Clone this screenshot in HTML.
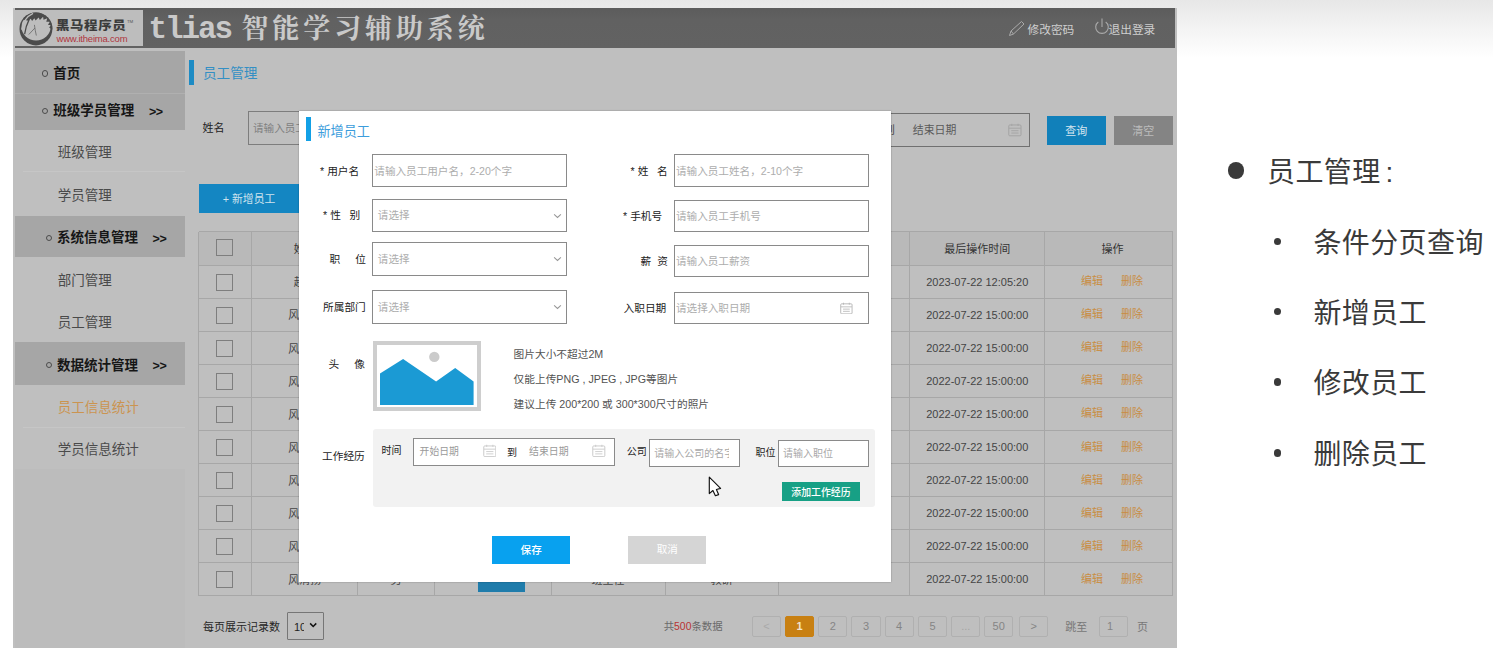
<!DOCTYPE html>
<html lang="zh-CN"><head><meta charset="utf-8"><title>tlias 智能学习辅助系统</title>
<style>
*{box-sizing:border-box;margin:0;padding:0}
html,body{width:1493px;height:657px;overflow:hidden}
body{position:relative;background:linear-gradient(#e7e7e7 0,#f4f4f4 30px,#fff 58px,#fff 100%);font-family:"Liberation Sans","Noto Sans CJK SC",sans-serif;font-size:11px;color:#333}
.a{position:absolute;white-space:nowrap}
.app{left:13.3px;top:7.5px;width:1164px;height:640.3px;background:#bfbfbf}
.hdr{left:14.5px;top:7.9px;width:1160.9px;height:40.2px;background:linear-gradient(#5c5c5c,#616161 30%,#626262)}
.logo{left:14.9px;top:9.7px;width:128.1px;height:36.4px;background:#bdbdbd}
.title{left:148.5px;top:8.5px;height:39px;line-height:39px;color:#c9c9c9;font-weight:bold;font-size:27.5px}
.title .m{font-family:"Liberation Mono",monospace;font-size:31px;letter-spacing:-2.1px;position:relative;top:0.5px}
.title .k{font-family:"Liberation Serif","Noto Serif CJK SC",serif;font-size:27px;letter-spacing:3.9px;margin-left:10.4px}
.sh{left:15px;width:170px;background:#a6a6a6;font-weight:bold;font-size:13.5px;color:#151515}
.ss{left:15px;width:170px;background:#bfbfbf;font-size:13.5px;color:#4a4a4a}
.inp{border:1px solid #8a8a8a;background:#fff}
.ph{color:#adadad;font-size:10.6px}
.lb{color:#222;font-size:10.7px}
.cell{color:#444;font-size:11px;text-align:center;padding-top:0.5px}
.cj{padding-top:1.2px}
.op{color:#c98d43;font-size:11px}
.pg{border:1px solid #b0b0b0;color:#858585;font-size:11px;text-align:center;height:20.6px;line-height:19.4px;top:616.2px;width:29.3px;border-radius:2px}
.sl{font-family:"Liberation Sans","Noto Sans CJK SC",sans-serif;color:#3a3a3a;font-size:28px;letter-spacing:0.4px}
</style></head>
<body>
<div class="a app"></div>
<div class="a hdr"></div>
<div class="a logo"></div>
<svg class="a" style="left:14px;top:8px" width="50" height="42" viewBox="0 0 782 657">
<defs><clipPath id="lc"><circle cx="343" cy="328" r="257"/></clipPath></defs>
<circle cx="343" cy="328" r="257" fill="#4b4b4b"/>
<ellipse cx="345" cy="296" rx="227" ry="212" fill="#bdbdbd"/>
<polygon clip-path="url(#lc)" fill="#4b4b4b" points="222,200 262,170 283,202 318,160 338,196 385,148 405,186 455,135 462,182 520,160 505,216 562,216 530,262 586,270 548,302 592,335 680,340 680,10 180,10 140,180"/>
<path d="M292 88 Q160 150 120 330" fill="none" stroke="#bdbdbd" stroke-width="18" stroke-linecap="round"/>
<path d="M236 182 Q182 290 168 400" fill="none" stroke="#4b4b4b" stroke-width="20" stroke-linecap="round"/>
<path d="M320 270 Q330 350 348 425 M322 318 L236 410" fill="none" stroke="#5a5a5a" stroke-width="11" stroke-linecap="round"/>
</svg>
<div class="a" style="left:56px;top:16.6px;font-size:13.5px;font-weight:900;color:#3c3c3c;letter-spacing:0.55px;line-height:18px;transform:scaleY(0.89);transform-origin:0 88%">黑马程序员</div>
<div class="a" style="left:126.9px;top:18.8px;font-size:4.4px;color:#555;line-height:5px">TM</div>
<div class="a" style="left:56.5px;top:33px;font-size:9.5px;color:#b0363e;line-height:11px;letter-spacing:-0.2px">www.itheima.com</div>
<div class="a title"><span class="m">tlias</span><span class="k">智能学习辅助系统</span></div>
<svg class="a" style="left:1007px;top:20px" width="20" height="18" viewBox="0 0 20 18"><path d="M2.5 15.5 L4 11 L14.5 1.5 L17 4 L6.5 14 Z M4 11 L6.5 14" fill="none" stroke="#aaa" stroke-width="1"/></svg>
<div class="a" style="left:1027.5px;top:21.5px;font-size:11.7px;color:#cfcfcf;line-height:15px">修改密码</div>
<svg class="a" style="left:1093px;top:17px" width="18" height="20" viewBox="0 0 18 20"><path d="M5.3 5 A6.3 6.3 0 1 0 12.7 5" fill="none" stroke="#aaa" stroke-width="1.1"/><path d="M9 1.5 V10" stroke="#aaa" stroke-width="1.1"/></svg>
<div class="a" style="left:1108.5px;top:21.5px;font-size:11.7px;color:#cfcfcf;line-height:15px">退出登录</div>
<div class="a" style="left:15px;top:51px;width:170px;height:597px;background:#bcbcbc"></div>
<div class="a sh" style="top:51px;height:42.3px"></div>
<div class="a" style="left:41.9px;top:70.45px;width:6.1px;height:6.1px;border:0.9px solid #4c4c4c;border-radius:50%"></div>
<div class="a" style="left:53.3px;top:63.75px;line-height:20px;font-weight:bold;font-size:13.5px;color:#161616">首页</div>
<div class="a" style="left:15px;top:93.2px;width:170px;height:1px;background:#b0b0b0"></div>
<div class="a sh" style="top:93.8px;height:36px"></div>
<div class="a" style="left:41.9px;top:107.7px;width:6.1px;height:6.1px;border:0.9px solid #4c4c4c;border-radius:50%"></div>
<div class="a" style="left:53.3px;top:101.0px;line-height:20px;font-weight:bold;font-size:13.5px;color:#161616">班级学员管理</div>
<div class="a" style="left:149px;top:101.5px;line-height:20px;font-weight:bold;font-size:12.5px;color:#161616;letter-spacing:-0.5px">&gt;&gt;</div>
<div class="a ss" style="top:129.8px;height:42px"></div>
<div class="a" style="left:57.8px;top:142.9px;line-height:20px;font-size:13.5px;color:#4a4a4a">班级管理</div>
<div class="a" style="left:23px;top:171.3px;width:162px;height:1px;background:#c6c6c6"></div>
<div class="a ss" style="top:171.8px;height:43.8px"></div>
<div class="a" style="left:57.8px;top:185.8px;line-height:20px;font-size:13.5px;color:#4a4a4a">学员管理</div>
<div class="a sh" style="top:215.6px;height:41.4px"></div>
<div class="a" style="left:45.5px;top:234.79999999999998px;width:6.1px;height:6.1px;border:0.9px solid #4c4c4c;border-radius:50%"></div>
<div class="a" style="left:56.9px;top:228.1px;line-height:20px;font-weight:bold;font-size:13.5px;color:#161616">系统信息管理</div>
<div class="a" style="left:152.6px;top:228.6px;line-height:20px;font-weight:bold;font-size:12.5px;color:#161616;letter-spacing:-0.5px">&gt;&gt;</div>
<div class="a ss" style="top:257px;height:43px"></div>
<div class="a" style="left:57.8px;top:270.6px;line-height:20px;font-size:13.5px;color:#4a4a4a">部门管理</div>
<div class="a" style="left:23px;top:299.5px;width:162px;height:1px;background:#c6c6c6"></div>
<div class="a ss" style="top:300px;height:42.4px"></div>
<div class="a" style="left:57.8px;top:313.3px;line-height:20px;font-size:13.5px;color:#4a4a4a">员工管理</div>
<div class="a sh" style="top:342.4px;height:42.2px"></div>
<div class="a" style="left:45.5px;top:362.2px;width:6.1px;height:6.1px;border:0.9px solid #4c4c4c;border-radius:50%"></div>
<div class="a" style="left:56.9px;top:355.5px;line-height:20px;font-weight:bold;font-size:13.5px;color:#161616">数据统计管理</div>
<div class="a" style="left:152.6px;top:356.0px;line-height:20px;font-weight:bold;font-size:12.5px;color:#161616;letter-spacing:-0.5px">&gt;&gt;</div>
<div class="a ss" style="top:384.6px;height:43px"></div>
<div class="a" style="left:57.8px;top:398.20000000000005px;line-height:20px;font-size:13.5px;color:#cb9450">员工信息统计</div>
<div class="a" style="left:23px;top:427.1px;width:162px;height:1px;background:#c6c6c6"></div>
<div class="a ss" style="top:427.6px;height:41px"></div>
<div class="a" style="left:57.8px;top:440.20000000000005px;line-height:20px;font-size:13.5px;color:#4a4a4a">学员信息统计</div>
<div class="a" style="left:189px;top:59.8px;width:5px;height:25.2px;background:#1d8bc4"></div>
<div class="a" style="left:203px;top:64.2px;line-height:20px;font-size:13.6px;color:#338fc4">员工管理</div>
<div class="a lb" style="left:202.6px;top:120px;line-height:16px;color:#222;font-size:11px">姓名</div>
<div class="a" style="left:248.3px;top:111.1px;width:120px;height:33.6px;border:1px solid #7d7d7d"></div>
<div class="a" style="left:253px;top:120.4px;line-height:16px;font-size:10.6px;color:#808080">请输入员工姓名</div>
<div class="a" style="left:700px;top:113.1px;width:329.7px;height:33.6px;border:1px solid #707070"></div>
<div class="a" style="left:884px;top:122.2px;line-height:16px;font-size:10.9px;color:#444">到</div>
<div class="a" style="left:912.8px;top:122.2px;line-height:16px;font-size:10.9px;color:#5a5a5a">结束日期</div>
<svg class="a" style="left:1008px;top:122.8px" width="13.8" height="13.8" viewBox="0 0 14 14"><rect x="0.8" y="2" width="12.4" height="11" rx="1" fill="none" stroke="#a4a4a4" stroke-width="1"/><path d="M1 5.3 H13 M3.8 0.8 V3 M10.2 0.8 V3 M3.3 7.8 H10.7 M3.3 10.2 H10.7" stroke="#a4a4a4" stroke-width="0.9" fill="none"/></svg>
<div class="a" style="left:1046.5px;top:115.8px;width:59.5px;height:29px;background:#1180ba;color:#d5e6f0;font-size:11px;text-align:center;line-height:29.4px;padding-top:0.8px">查询</div>
<div class="a" style="left:1113.7px;top:115.8px;width:59.3px;height:29px;background:#848484;color:#bcbcbc;font-size:11px;text-align:center;line-height:29.4px;padding-top:0.8px">清空</div>
<div class="a" style="left:198.5px;top:184.2px;width:104px;height:29px;background:#1486c2;color:#cfe3ee;font-size:10.8px;text-align:center;line-height:31px;padding-right:3px">+ 新增员工</div>
<div class="a" style="left:198.5px;top:231.6px;width:973.8px;height:33.6px;background:#b9b9b9"></div>
<div class="a" style="left:198.5px;top:231.1px;width:974.3px;height:1px;background:#a7a7a7"></div>
<div class="a" style="left:198.5px;top:264.7px;width:974.3px;height:1px;background:#a7a7a7"></div>
<div class="a" style="left:198.5px;top:297.76px;width:974.3px;height:1px;background:#a7a7a7"></div>
<div class="a" style="left:198.5px;top:330.82px;width:974.3px;height:1px;background:#a7a7a7"></div>
<div class="a" style="left:198.5px;top:363.88px;width:974.3px;height:1px;background:#a7a7a7"></div>
<div class="a" style="left:198.5px;top:396.94px;width:974.3px;height:1px;background:#a7a7a7"></div>
<div class="a" style="left:198.5px;top:430.0px;width:974.3px;height:1px;background:#a7a7a7"></div>
<div class="a" style="left:198.5px;top:463.06px;width:974.3px;height:1px;background:#a7a7a7"></div>
<div class="a" style="left:198.5px;top:496.12px;width:974.3px;height:1px;background:#a7a7a7"></div>
<div class="a" style="left:198.5px;top:529.18px;width:974.3px;height:1px;background:#a7a7a7"></div>
<div class="a" style="left:198.5px;top:562.24px;width:974.3px;height:1px;background:#a7a7a7"></div>
<div class="a" style="left:198.5px;top:595.3px;width:974.3px;height:1px;background:#a7a7a7"></div>
<div class="a" style="left:198.0px;top:231.6px;width:1px;height:364.19999999999993px;background:#a7a7a7"></div>
<div class="a" style="left:251.1px;top:231.6px;width:1px;height:364.19999999999993px;background:#a7a7a7"></div>
<div class="a" style="left:357.3px;top:231.6px;width:1px;height:364.19999999999993px;background:#a7a7a7"></div>
<div class="a" style="left:433.8px;top:231.6px;width:1px;height:364.19999999999993px;background:#a7a7a7"></div>
<div class="a" style="left:550.5px;top:231.6px;width:1px;height:364.19999999999993px;background:#a7a7a7"></div>
<div class="a" style="left:664.5px;top:231.6px;width:1px;height:364.19999999999993px;background:#a7a7a7"></div>
<div class="a" style="left:778.0px;top:231.6px;width:1px;height:364.19999999999993px;background:#a7a7a7"></div>
<div class="a" style="left:909.1px;top:231.6px;width:1px;height:364.19999999999993px;background:#a7a7a7"></div>
<div class="a" style="left:1044.4px;top:231.6px;width:1px;height:364.19999999999993px;background:#a7a7a7"></div>
<div class="a" style="left:1171.8px;top:231.6px;width:1px;height:364.19999999999993px;background:#a7a7a7"></div>
<div class="a" style="left:216.2px;top:239.0px;width:16.7px;height:17.2px;border:1px solid #7e7e7e"></div>
<div class="a" style="left:216.2px;top:273.7px;width:16.7px;height:17.2px;border:1px solid #7e7e7e"></div>
<div class="a" style="left:216.2px;top:306.76px;width:16.7px;height:17.2px;border:1px solid #7e7e7e"></div>
<div class="a" style="left:216.2px;top:339.82px;width:16.7px;height:17.2px;border:1px solid #7e7e7e"></div>
<div class="a" style="left:216.2px;top:372.88px;width:16.7px;height:17.2px;border:1px solid #7e7e7e"></div>
<div class="a" style="left:216.2px;top:405.94px;width:16.7px;height:17.2px;border:1px solid #7e7e7e"></div>
<div class="a" style="left:216.2px;top:439.0px;width:16.7px;height:17.2px;border:1px solid #7e7e7e"></div>
<div class="a" style="left:216.2px;top:472.06px;width:16.7px;height:17.2px;border:1px solid #7e7e7e"></div>
<div class="a" style="left:216.2px;top:505.12px;width:16.7px;height:17.2px;border:1px solid #7e7e7e"></div>
<div class="a" style="left:216.2px;top:538.18px;width:16.7px;height:17.2px;border:1px solid #7e7e7e"></div>
<div class="a" style="left:216.2px;top:571.24px;width:16.7px;height:17.2px;border:1px solid #7e7e7e"></div>
<div class="a cell cj" style="left:251.6px;top:231.6px;width:106.20000000000002px;height:33.06px;line-height:33.06px;color:#333">姓名</div>
<div class="a cell cj" style="left:909.6px;top:231.6px;width:135.30000000000007px;height:33.06px;line-height:33.06px;color:#333">最后操作时间</div>
<div class="a cell cj" style="left:1044.9px;top:231.6px;width:127.39999999999986px;height:33.06px;line-height:33.06px;color:#333;padding-left:8px">操作</div>
<div class="a cell cj" style="left:251.6px;top:265.2px;width:106.20000000000002px;height:33.06px;line-height:33.06px;">赵敏</div>
<div class="a cell" style="left:909.6px;top:265.2px;width:135.30000000000007px;height:33.06px;line-height:33.06px;">2023-07-22 12:05:20</div>
<div class="a op" style="left:1080.9px;top:265.2px;line-height:33.06px">编辑</div>
<div class="a op" style="left:1121.1px;top:265.2px;line-height:33.06px">删除</div>
<div class="a cell cj" style="left:251.6px;top:298.26px;width:106.20000000000002px;height:33.06px;line-height:33.06px;">风清扬</div>
<div class="a cell" style="left:909.6px;top:298.26px;width:135.30000000000007px;height:33.06px;line-height:33.06px;">2022-07-22 15:00:00</div>
<div class="a op" style="left:1080.9px;top:298.26px;line-height:33.06px">编辑</div>
<div class="a op" style="left:1121.1px;top:298.26px;line-height:33.06px">删除</div>
<div class="a cell cj" style="left:251.6px;top:331.32px;width:106.20000000000002px;height:33.06px;line-height:33.06px;">风清扬</div>
<div class="a cell" style="left:909.6px;top:331.32px;width:135.30000000000007px;height:33.06px;line-height:33.06px;">2022-07-22 15:00:00</div>
<div class="a op" style="left:1080.9px;top:331.32px;line-height:33.06px">编辑</div>
<div class="a op" style="left:1121.1px;top:331.32px;line-height:33.06px">删除</div>
<div class="a cell cj" style="left:251.6px;top:364.38px;width:106.20000000000002px;height:33.06px;line-height:33.06px;">风清扬</div>
<div class="a cell" style="left:909.6px;top:364.38px;width:135.30000000000007px;height:33.06px;line-height:33.06px;">2022-07-22 15:00:00</div>
<div class="a op" style="left:1080.9px;top:364.38px;line-height:33.06px">编辑</div>
<div class="a op" style="left:1121.1px;top:364.38px;line-height:33.06px">删除</div>
<div class="a cell cj" style="left:251.6px;top:397.44px;width:106.20000000000002px;height:33.06px;line-height:33.06px;">风清扬</div>
<div class="a cell" style="left:909.6px;top:397.44px;width:135.30000000000007px;height:33.06px;line-height:33.06px;">2022-07-22 15:00:00</div>
<div class="a op" style="left:1080.9px;top:397.44px;line-height:33.06px">编辑</div>
<div class="a op" style="left:1121.1px;top:397.44px;line-height:33.06px">删除</div>
<div class="a cell cj" style="left:251.6px;top:430.5px;width:106.20000000000002px;height:33.06px;line-height:33.06px;">风清扬</div>
<div class="a cell" style="left:909.6px;top:430.5px;width:135.30000000000007px;height:33.06px;line-height:33.06px;">2022-07-22 15:00:00</div>
<div class="a op" style="left:1080.9px;top:430.5px;line-height:33.06px">编辑</div>
<div class="a op" style="left:1121.1px;top:430.5px;line-height:33.06px">删除</div>
<div class="a cell cj" style="left:251.6px;top:463.56px;width:106.20000000000002px;height:33.06px;line-height:33.06px;">风清扬</div>
<div class="a cell" style="left:909.6px;top:463.56px;width:135.30000000000007px;height:33.06px;line-height:33.06px;">2022-07-22 15:00:00</div>
<div class="a op" style="left:1080.9px;top:463.56px;line-height:33.06px">编辑</div>
<div class="a op" style="left:1121.1px;top:463.56px;line-height:33.06px">删除</div>
<div class="a cell cj" style="left:251.6px;top:496.62px;width:106.20000000000002px;height:33.06px;line-height:33.06px;">风清扬</div>
<div class="a cell" style="left:909.6px;top:496.62px;width:135.30000000000007px;height:33.06px;line-height:33.06px;">2022-07-22 15:00:00</div>
<div class="a op" style="left:1080.9px;top:496.62px;line-height:33.06px">编辑</div>
<div class="a op" style="left:1121.1px;top:496.62px;line-height:33.06px">删除</div>
<div class="a cell cj" style="left:251.6px;top:529.68px;width:106.20000000000002px;height:33.06px;line-height:33.06px;">风清扬</div>
<div class="a cell" style="left:909.6px;top:529.68px;width:135.30000000000007px;height:33.06px;line-height:33.06px;">2022-07-22 15:00:00</div>
<div class="a op" style="left:1080.9px;top:529.68px;line-height:33.06px">编辑</div>
<div class="a op" style="left:1121.1px;top:529.68px;line-height:33.06px">删除</div>
<div class="a cell cj" style="left:251.6px;top:562.74px;width:106.20000000000002px;height:33.06px;line-height:33.06px;">风清扬</div>
<div class="a cell" style="left:909.6px;top:562.74px;width:135.30000000000007px;height:33.06px;line-height:33.06px;">2022-07-22 15:00:00</div>
<div class="a op" style="left:1080.9px;top:562.74px;line-height:33.06px">编辑</div>
<div class="a op" style="left:1121.1px;top:562.74px;line-height:33.06px">删除</div>
<div class="a cell cj" style="left:357.8px;top:562.74px;width:76.5px;height:33.06px;line-height:33.06px;">男</div>
<div class="a cell cj" style="left:551px;top:562.74px;width:114px;height:33.06px;line-height:33.06px;">班主任</div>
<div class="a cell cj" style="left:665px;top:562.74px;width:113.5px;height:33.06px;line-height:33.06px;">教研</div>
<div class="a" style="left:477.5px;top:566.14px;width:47.4px;height:26.3px;background:#1f7cab;box-shadow:0 0 1px #a9c4d4"></div>
<div class="a" style="left:203px;top:619.2px;line-height:16px;font-size:11px;color:#262626">每页展示记录数</div>
<div class="a" style="left:287.4px;top:612.4px;width:36.3px;height:27.3px;border:1px solid #767676;border-radius:1px"></div>
<div class="a" style="left:294px;top:618.8px;line-height:16px;font-size:11px;color:#222;width:9.6px;overflow:hidden">10</div>
<svg class="a" style="left:308.8px;top:622.2px" width="8.4" height="6.5" viewBox="0 0 9 7"><path d="M1.2 1.5 L4.5 4.8 L7.8 1.5" fill="none" stroke="#111" stroke-width="1.6"/></svg>
<div class="a" style="left:663.7px;top:618.6px;line-height:16px;font-size:10.4px;color:#6a6a6a">共<span style="color:#b83232">500</span>条数据</div>
<div class="a pg" style="left:751.9px;color:#a9a9a9">&lt;</div>
<div class="a pg" style="left:784.9px;background:#c88012;border-color:#c88012;color:#f1e3cf;font-weight:bold">1</div>
<div class="a pg" style="left:818.2px">2</div>
<div class="a pg" style="left:851.3px">3</div>
<div class="a pg" style="left:884.5px">4</div>
<div class="a pg" style="left:917.8px">5</div>
<div class="a pg" style="left:951.2px;color:#a5a5a5">...</div>
<div class="a pg" style="left:984.1px">50</div>
<div class="a pg" style="left:1019.2px">&gt;</div>
<div class="a" style="left:1065.3px;top:618.5px;line-height:16px;font-size:11px;color:#777">跳至</div>
<div class="a pg" style="left:1099px;width:28.5px;text-align:left;padding-left:7px">1</div>
<div class="a" style="left:1137px;top:618.5px;line-height:16px;font-size:11px;color:#777">页</div>
<div class="a" style="left:298.9px;top:110.6px;width:592.3px;height:471.3px;background:#fff;box-shadow:0 0 1.5px rgba(0,0,0,.35)"></div>
<div class="a" style="left:306px;top:117px;width:5px;height:24.2px;background:#12a0e6"></div>
<div class="a" style="left:317.5px;top:121.8px;line-height:20px;font-size:13.1px;color:#3c9ddc">新增员工</div>
<div class="a inp" style="left:372.4px;top:154.3px;width:194.6px;height:32.6px"></div>
<div class="a ph" style="left:374.3px;top:162.60000000000002px;line-height:16px">请输入员工用户名，2-20个字</div>
<div class="a inp" style="left:372.4px;top:198.6px;width:194.6px;height:33.3px"></div>
<div class="a ph" style="left:377.8px;top:207.25px;line-height:16px">请选择</div>
<div class="a inp" style="left:372.4px;top:242.2px;width:194.6px;height:33.7px"></div>
<div class="a ph" style="left:377.8px;top:251.05px;line-height:16px">请选择</div>
<div class="a inp" style="left:372.4px;top:289.6px;width:194.6px;height:34.2px"></div>
<div class="a ph" style="left:377.8px;top:298.70000000000005px;line-height:16px">请选择</div>
<svg class="a" style="left:553.2px;top:212.7px" width="9" height="6" viewBox="0 0 9 6"><path d="M1.1 1.3 L4.5 4.5 L7.9 1.3" fill="none" stroke="#979797" stroke-width="1.05"/></svg>
<svg class="a" style="left:553.2px;top:256.2px" width="9" height="6" viewBox="0 0 9 6"><path d="M1.1 1.3 L4.5 4.5 L7.9 1.3" fill="none" stroke="#979797" stroke-width="1.05"/></svg>
<svg class="a" style="left:553.2px;top:304.1px" width="9" height="6" viewBox="0 0 9 6"><path d="M1.1 1.3 L4.5 4.5 L7.9 1.3" fill="none" stroke="#979797" stroke-width="1.05"/></svg>
<div class="a inp" style="left:674.1px;top:154.3px;width:194.7px;height:32.6px"></div>
<div class="a ph" style="left:676px;top:162.60000000000002px;line-height:16px">请输入员工姓名，2-10个字</div>
<div class="a inp" style="left:674.1px;top:200.2px;width:194.7px;height:31.7px"></div>
<div class="a ph" style="left:676px;top:208.04999999999998px;line-height:16px">请输入员工手机号</div>
<div class="a inp" style="left:674.1px;top:245.1px;width:194.7px;height:31.7px"></div>
<div class="a ph" style="left:676px;top:252.95px;line-height:16px">请输入员工薪资</div>
<div class="a inp" style="left:674.1px;top:292px;width:194.7px;height:31.7px"></div>
<div class="a ph" style="left:676px;top:299.85px;line-height:16px">请选择入职日期</div>
<svg class="a" style="left:840.2px;top:301.6px" width="12.8" height="12.8" viewBox="0 0 14 14"><rect x="0.8" y="2" width="12.4" height="11" rx="1" fill="none" stroke="#b5b5b5" stroke-width="1"/><path d="M1 5.3 H13 M3.8 0.8 V3 M10.2 0.8 V3 M3.3 7.8 H10.7 M3.3 10.2 H10.7" stroke="#b5b5b5" stroke-width="0.9" fill="none"/></svg>
<div class="a lb" style="left:320px;top:162.8px;line-height:16px;letter-spacing:0px">* 用户名</div>
<div class="a lb" style="left:323px;top:207.3px;line-height:16px;letter-spacing:0px">* 性<span style="display:inline-block;width:8.6px"></span>别</div>
<div class="a lb" style="left:329.6px;top:250.8px;line-height:16px;letter-spacing:0px">职&nbsp;&nbsp;&nbsp;&nbsp;&nbsp;位</div>
<div class="a lb" style="left:323px;top:298.5px;line-height:16px;letter-spacing:0px">所属部门</div>
<div class="a lb" style="left:630.5px;top:162.8px;line-height:16px;letter-spacing:0px">* 姓<span style="display:inline-block;width:8.6px"></span>名</div>
<div class="a lb" style="left:623px;top:208px;line-height:16px;letter-spacing:0px">* 手机号</div>
<div class="a lb" style="left:640.6px;top:253px;line-height:16px;letter-spacing:0px">薪&nbsp;&nbsp;资</div>
<div class="a lb" style="left:623.5px;top:299.5px;line-height:16px;letter-spacing:0px">入职日期</div>
<div class="a lb" style="left:328.6px;top:356.2px;line-height:16px;letter-spacing:0px">头&nbsp;&nbsp;&nbsp;&nbsp;&nbsp;像</div>
<div class="a" style="left:373px;top:340.7px;width:107.8px;height:70.2px;background:#fff;border:4.6px solid #cecece"></div>
<svg class="a" style="left:373px;top:340.7px" width="107.8" height="70.2" viewBox="373 340.7 107.8 70.2"><polygon points="380,373.2 403.1,358.8 436.1,381.3 455.2,367.6 473.6,381.3 473.6,404.6 380,404.6" fill="#1b9ad4"/><circle cx="434.3" cy="356.6" r="5.2" fill="#cbcbcb"/></svg>
<div class="a" style="left:513.6px;top:346.2px;line-height:16px;font-size:10.7px;color:#525252">图片大小不超过2M</div>
<div class="a" style="left:513.6px;top:371.3px;line-height:16px;font-size:10.7px;color:#525252">仅能上传PNG , JPEG , JPG等图片</div>
<div class="a" style="left:513.6px;top:396px;line-height:16px;font-size:10.7px;color:#525252">建议上传 200*200 或 300*300尺寸的照片</div>
<div class="a" style="left:373px;top:429.2px;width:502px;height:77.6px;background:#f2f2f2;border-radius:3px"></div>
<div class="a lb" style="left:322px;top:448px;line-height:16px;letter-spacing:0px">工作经历</div>
<div class="a lb" style="left:381.4px;top:442.5px;line-height:16px;font-size:10px;color:#222">时间</div>
<div class="a inp" style="left:413.2px;top:437.5px;width:202px;height:28.4px"></div>
<div class="a" style="left:419.6px;top:444.4px;line-height:16px;font-size:9.8px;color:#9a9a9a">开始日期</div>
<svg class="a" style="left:482.8px;top:443.8px" width="13.6" height="13.6" viewBox="0 0 14 14"><rect x="0.8" y="2" width="12.4" height="11" rx="1" fill="none" stroke="#c9c9c9" stroke-width="1"/><path d="M1 5.3 H13 M3.8 0.8 V3 M10.2 0.8 V3 M3.3 7.8 H10.7 M3.3 10.2 H10.7" stroke="#c9c9c9" stroke-width="0.9" fill="none"/></svg>
<div class="a" style="left:507px;top:444.6px;line-height:16px;font-size:10px;color:#222">到</div>
<div class="a" style="left:529px;top:444.3px;line-height:16px;font-size:9.9px;color:#9a9a9a">结束日期</div>
<svg class="a" style="left:592.3px;top:443.8px" width="13.6" height="13.6" viewBox="0 0 14 14"><rect x="0.8" y="2" width="12.4" height="11" rx="1" fill="none" stroke="#c9c9c9" stroke-width="1"/><path d="M1 5.3 H13 M3.8 0.8 V3 M10.2 0.8 V3 M3.3 7.8 H10.7 M3.3 10.2 H10.7" stroke="#c9c9c9" stroke-width="0.9" fill="none"/></svg>
<div class="a lb" style="left:626.8px;top:444px;line-height:16px;font-size:10px;color:#222">公司</div>
<div class="a inp" style="left:649.3px;top:439px;width:90.5px;height:27.7px"></div>
<div class="a" style="left:654.3px;top:445.6px;line-height:16px;font-size:10px;color:#a8a8a8;width:75px;overflow:hidden">请输入公司的名字</div>
<div class="a lb" style="left:755.4px;top:444.5px;line-height:16px;font-size:10px;color:#222">职位</div>
<div class="a inp" style="left:778px;top:439.5px;width:91px;height:27.6px"></div>
<div class="a" style="left:783px;top:445.7px;line-height:16px;font-size:10px;color:#a8a8a8">请输入职位</div>
<div class="a" style="left:781.9px;top:482.3px;width:78px;height:19.2px;background:#17a085;color:#fff;font-size:9.9px;text-align:center;line-height:21px;font-weight:500">添加工作经历</div>
<svg class="a" style="left:700px;top:470px" width="30" height="32" viewBox="700 470 30 32"><path d="M709.3 477.2 L709.3 493.6 L712.9 490.5 L715.4 495.7 L718.6 494.6 L716.4 489.5 L720.6 488.4 Z" fill="#fff" stroke="#111" stroke-width="1.15" stroke-linejoin="round"/></svg>
<div class="a" style="left:492px;top:536px;width:78.3px;height:27.6px;background:#08a1ef;color:#fff;font-size:10.6px;text-align:center;line-height:28.6px;font-weight:500">保存</div>
<div class="a" style="left:628.2px;top:536px;width:78.3px;height:27.6px;background:#d5d5d5;color:#fff;font-size:10.6px;text-align:center;line-height:27.6px">取消</div>
<div class="a" style="left:1227.7px;top:162.3px;width:16.8px;height:16.8px;border-radius:50%;background:#3a3a3a"></div>
<div class="a sl" style="left:1267px;top:153.2px;line-height:40px">员工管理<span style="letter-spacing:0;margin-left:5px">:</span></div>
<div class="a" style="left:1273.5px;top:238.10000000000002px;width:7.4px;height:7.4px;border-radius:50%;background:#3a3a3a"></div>
<div class="a sl" style="left:1313.4px;top:224.20000000000002px;line-height:40px">条件分页查询</div>
<div class="a" style="left:1273.5px;top:307.90000000000003px;width:7.4px;height:7.4px;border-radius:50%;background:#3a3a3a"></div>
<div class="a sl" style="left:1313.4px;top:294.0px;line-height:40px">新增员工</div>
<div class="a" style="left:1273.5px;top:378.3px;width:7.4px;height:7.4px;border-radius:50%;background:#3a3a3a"></div>
<div class="a sl" style="left:1313.4px;top:364.4px;line-height:40px">修改员工</div>
<div class="a" style="left:1273.5px;top:449.3px;width:7.4px;height:7.4px;border-radius:50%;background:#3a3a3a"></div>
<div class="a sl" style="left:1313.4px;top:435.4px;line-height:40px">删除员工</div>
</body></html>
